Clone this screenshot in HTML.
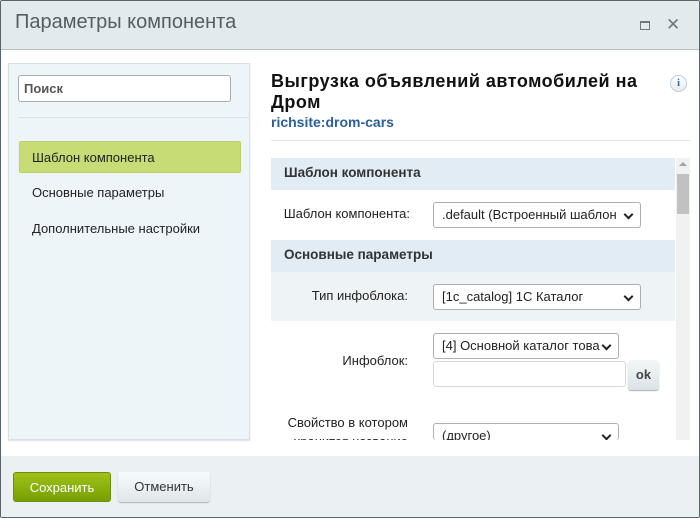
<!DOCTYPE html>
<html><head><meta charset="utf-8"><style>
*{box-sizing:border-box;margin:0;padding:0}
body{width:700px;height:518px;overflow:hidden;font-family:"Liberation Sans",Arial,sans-serif;background:#fff;position:relative;color:#000}
.frame{position:absolute;left:0;top:0;width:700px;height:518px;border:1px solid #59636b;border-radius:2px;overflow:hidden}
.hdr{position:absolute;left:-1px;top:-1px;width:700px;height:50px;background:#e2eaee;border-bottom:1px solid #b7c0c5}
.hdr h1{position:absolute;left:15px;top:11px;font-weight:normal;font-size:20px;color:#555d62}
.ftr{position:absolute;left:-1px;top:455px;width:700px;height:62px;background:#ebf0f2}
.abs{position:absolute}
.left{left:7px;top:62px;width:242px;height:377px;background:#eef5f9;border:1px solid #d9e0e4;box-shadow:0 1px 1px #dde}
.item{position:absolute;left:32px;font-size:13px;color:#222}
.sel{position:absolute;left:10px;top:77px;width:222px;height:32px;background:#c8dc75;border:1px solid #bdd067;border-radius:2px}
.clip{position:absolute;left:-1px;top:157px;width:700px;height:282px;overflow:hidden}
.sec{position:absolute;left:271px;width:404px;height:32px;background:#e2ecf5;font-weight:bold;font-size:13.5px;color:#333;padding:7px 13px}
.lbl{position:absolute;font-size:13px;color:#222;text-align:right;width:140px;left:268px}
.selbox{position:absolute;height:26px;border:1px solid #aab0b4;border-radius:3px;background:#fff;font-size:13px;color:#222;padding:4px 8px;overflow:hidden;white-space:nowrap}
.selbox::after{content:"";position:absolute;right:8px;top:8px;width:5px;height:5px;border-right:2px solid #222;border-bottom:2px solid #222;transform:rotate(45deg);background:#fff}
.btn{position:absolute;height:30px;border-radius:3px;font-size:13px;text-align:center;line-height:29px}
</style></head><body><div class="frame">
<div class="hdr"><h1>Параметры компонента</h1>
<div class="abs" style="left:640px;top:21px;width:10px;height:9px;border:1.5px solid #6d7880;border-top-width:2.5px"></div>
<div class="abs" style="left:666px;top:15px;font-size:17px;color:#6d7880">✕</div>
</div>
<div class="abs left">
<div class="abs" style="left:9px;top:11px;width:213px;height:27px;border:1px solid #a7acaf;border-radius:3px;background:#fff;font-size:13px;font-weight:bold;color:#555;padding:5px 5px">Поиск</div>
<div class="abs" style="left:9px;top:53px;width:232px;height:1px;background:#dbe3e8"></div>
<div class="sel"></div>
<div class="item" style="left:23px;top:86px">Шаблон компонента</div>
<div class="item" style="left:23px;top:121px">Основные параметры</div>
<div class="item" style="left:23px;top:157px">Дополнительные настройки</div>
</div>
<div class="abs" style="left:270px;top:70px;font-size:18px;letter-spacing:0.5px;font-weight:bold;line-height:21px;color:#111;white-space:nowrap">Выгрузка объявлений автомобилей на<br>Дром</div>
<div class="abs" style="left:270px;top:113px;font-size:14px;font-weight:bold;color:#2a5f97">richsite:drom-cars</div>
<div class="abs" style="left:669px;top:74px;width:17px;height:17px;border-radius:50%;border:1px solid #c4cfd8;background:linear-gradient(#fff,#e5ecf2);font:bold 11px 'Liberation Serif',serif;color:#2a6fb5;text-align:center;line-height:15px">i</div>
<div class="abs" style="left:270px;top:139px;width:419px;height:1px;background:#e3e7ea"></div>
<div class="clip"><div class="abs" style="left:0;top:0;width:700px;height:282px;overflow:hidden"><div class="abs" style="left:0;top:-158px;width:700px;height:440px">
<div class="sec" style="top:158px">Шаблон компонента</div>
<div class="lbl" style="top:206px;width:142px">Шаблон компонента:</div>
<div class="selbox" style="left:433px;top:202px;width:208px">.default (Встроенный шаблон</div>
<div class="sec" style="top:240px">Основные параметры</div>
<div class="abs" style="left:271px;top:272px;width:404px;height:49px;background:#eef3f5"></div>
<div class="lbl" style="top:288px">Тип инфоблока:</div>
<div class="selbox" style="left:433px;top:284px;width:208px">[1c_catalog] 1С Каталог</div>
<div class="lbl" style="top:353px">Инфоблок:</div>
<div class="selbox" style="left:433px;top:333px;width:186px">[4] Основной каталог това</div>
<div class="abs" style="left:433px;top:361px;width:193px;height:26px;border:1px solid #d5dadd;border-radius:3px;background:#fff"></div>
<div class="abs" style="left:628px;top:360px;width:31px;height:30px;border-radius:3px;background:linear-gradient(#f4f7f8,#dbe2e6);box-shadow:0 1px 1px #aab;font-weight:bold;font-size:13px;color:#444;text-align:center;line-height:29px">ok</div>
<div class="lbl" style="top:413px;line-height:19px;height:27px;overflow:hidden">Свойство в котором<br>хранится название</div>
<div class="selbox" style="left:433px;top:423px;width:186px;height:17px;border-bottom:none">(другое)</div>
<div class="abs" style="left:676px;top:158px;width:14px;height:282px;background:#f1f1f1"></div>
<div class="abs" style="left:679px;top:162px;width:0;height:0;border-left:4px solid transparent;border-right:4px solid transparent;border-bottom:4px solid #a3a3a3"></div>
<div class="abs" style="left:677px;top:174px;width:12px;height:40px;background:#c1c1c1"></div>
</div></div></div>
<div class="ftr">
<div class="btn" style="left:13px;top:16px;background:linear-gradient(#9fc21a,#77a000);color:#fff;border:1px solid #6c8f0a;width:98px">Сохранить</div>
<div class="btn" style="left:118px;top:16px;width:92px;background:linear-gradient(#f8fafb,#dfe6e9);color:#333;box-shadow:0 1px 1px #aab3b8">Отменить</div>
</div>
</div></body></html>
